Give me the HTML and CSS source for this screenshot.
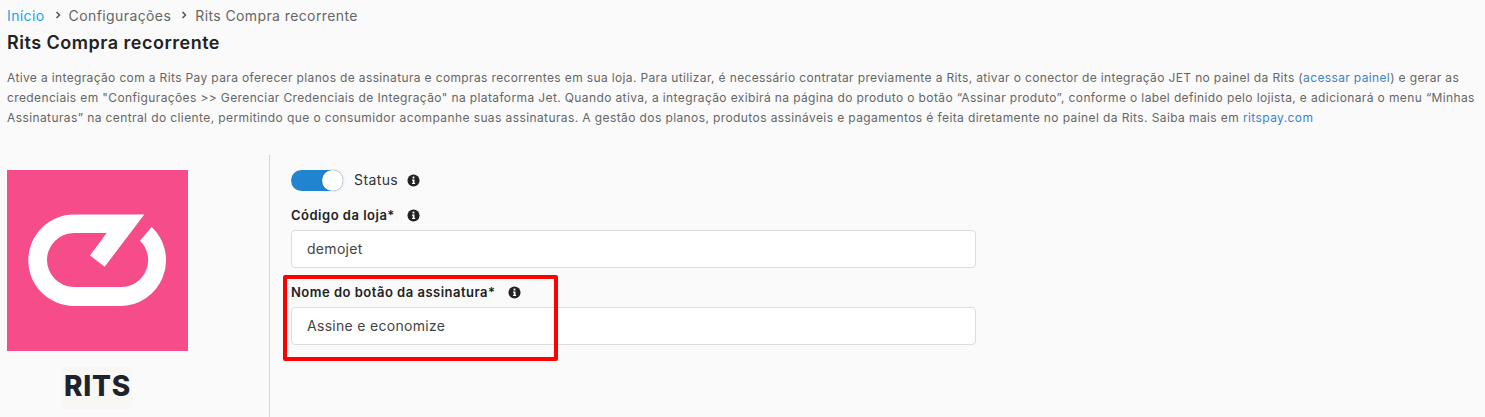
FILE: index.html
```html
<!DOCTYPE html>
<html lang="pt-BR">
<head>
<meta charset="utf-8">
<title>Rits Compra recorrente</title>
<link rel="stylesheet" href="styles.css">
</head>
<body>
<nav class="crumbs">
  <a class="crumb-home" href="#">Início</a>
  <svg class="chev" viewBox="0 0 8 10"><path d="M2.5 2 5.5 5 2.5 8" fill="none" stroke="#555" stroke-width="1.5"/></svg>
  <span>Configurações</span>
  <svg class="chev" viewBox="0 0 8 10"><path d="M2.5 2 5.5 5 2.5 8" fill="none" stroke="#555" stroke-width="1.5"/></svg>
  <span>Rits Compra recorrente</span>
</nav>
<h1 class="title">Rits Compra recorrente</h1>
<p class="desc"><span class="line l1">Ative a integração com a Rits Pay para oferecer planos de assinatura e compras recorrentes em sua loja. Para utilizar, é necessário contratar previamente a Rits, ativar o conector de integração JET no painel da Rits (<a href="#">acessar painel</a>) e gerar as</span><span class="line l2">credenciais em "Configurações &gt;&gt; Gerenciar Credenciais de Integração" na plataforma Jet. Quando ativa, a integração exibirá na página do produto o botão “Assinar produto”, conforme o label definido pelo lojista, e adicionará o menu “Minhas</span><span class="line l3">Assinaturas” na central do cliente, permitindo que o consumidor acompanhe suas assinaturas. A gestão dos planos, produtos assináveis e pagamentos é feita diretamente no painel da Rits. Saiba mais em <a href="#">ritspay.com</a></span></p>
<main class="content">
  <aside class="side">
    <svg class="logo" viewBox="0 0 181 181">
      <rect width="181" height="181" fill="#f64c89"/>
      <path fill="#fff" d="M137.3 44.5H67A45.75 45.75 0 0 0 67 136H113A45.75 45.75 0 0 0 144.7 57L133 70.7A27 27 0 0 1 113 117H67A27 27 0 0 1 67 63H99.7L83 85.5 97.7 96.7Z"/>
    </svg>
    <div class="brand">RITS</div>
  </aside>
  <section class="form">
    <div class="status">
      <span class="toggle"><span class="knob"></span></span>
      <span class="status-label">Status</span>
      <svg class="info" viewBox="0 0 14 14"><circle cx="7" cy="7" r="6.5" fill="#222"/><rect x="6" y="2.8" width="2" height="2" fill="#fff"/><path fill="#fff" d="M5.4 6h2.7v3.6h.7v1.2H5.4V9.6h.8V7.2h-.8z"/></svg>
    </div>
    <div class="field">
      <div class="label-row"><label class="label">Código da loja*</label><svg class="info" viewBox="0 0 14 14"><circle cx="7" cy="7" r="6.5" fill="#222"/><rect x="6" y="2.8" width="2" height="2" fill="#fff"/><path fill="#fff" d="M5.4 6h2.7v3.6h.7v1.2H5.4V9.6h.8V7.2h-.8z"/></svg></div>
      <div class="input">demojet</div>
    </div>
    <div class="field">
      <div class="label-row"><label class="label">Nome do botão da assinatura*</label><svg class="info" viewBox="0 0 14 14"><circle cx="7" cy="7" r="6.5" fill="#222"/><rect x="6" y="2.8" width="2" height="2" fill="#fff"/><path fill="#fff" d="M5.4 6h2.7v3.6h.7v1.2H5.4V9.6h.8V7.2h-.8z"/></svg></div>
      <div class="input">Assine e economize</div>
      <div class="highlight"></div>
    </div>
  </section>
</main>
</body>
</html>
```
FILE: styles.css
```css
* { box-sizing: border-box; }
html, body { margin: 0; height: 417px; overflow: hidden; }
body { background: #fafafa; font-family: Inter, "Open Sans", sans-serif; color: #222; padding: 0 0 0 7px; }
.crumbs { display: flex; align-items: center; height: 32px; padding-bottom: 2px; font-size: 14px; letter-spacing: .4px; color: #666; }
.crumb-home { color: #14a5ee; text-decoration: none; }
.chev { width: 8px; height: 10px; margin: 0 7px 0 9px; }
.title { margin: 0; font-size: 18px; line-height: 22px; font-weight: 600; letter-spacing: .5px; color: #222; }
.desc { margin: 14px 0 0; font-size: 12px; line-height: 20px; color: #666; white-space: nowrap; height: 87px; }
.line { display: block; }
.l1 { letter-spacing: .36px; }
.l2 { letter-spacing: .38px; }
.l3 { letter-spacing: .4px; }
.desc a { color: #3c84c8; text-decoration: none; }
.content { display: flex; height: 262px; }
.side { width: 263px; border-right: 1px solid #d6d6d6; padding-top: 15px; }
.logo { display: block; width: 181px; height: 181px; }
.brand { width: 69px; height: 42px; margin: 16px 0 0 56px; background: #f8f7f4; color: #1d222c; font-weight: 800; font-size: 28px; letter-spacing: .8px; line-height: 38px; text-align: center; }
.form { width: 706px; padding: 15px 0 0 21px; }
.status { display: flex; align-items: center; height: 21px; }
.toggle { display: flex; justify-content: flex-end; width: 52px; height: 21px; border-radius: 11px; background: #2184d0; }
.knob { width: 21px; height: 21px; border-radius: 50%; background: #fff; box-shadow: 0 0 2px rgba(0,0,0,.35); }
.status-label { margin: 0 9px 0 11px; padding-bottom: 2px; font-size: 14px; letter-spacing: .4px; color: #333; }
.info { display: block; width: 13px; height: 13px; }
.field { position: relative; }
.label-row { display: flex; align-items: center; gap: 12px; height: 19px; margin-top: 15px; }
.label { padding-bottom: 2px; font-size: 13px; font-weight: 600; letter-spacing: .5px; color: #222; }
.input { display: flex; align-items: center; height: 38px; margin-top: 5px; padding: 0 0 2px 15px; background: #fff; border: 1px solid #ddd; border-radius: 4px; font-size: 14px; letter-spacing: .3px; color: #444; }
.highlight { position: absolute; left: -8px; top: -8px; width: 275px; height: 86px; border: 4.5px solid #f00; border-radius: 2px; pointer-events: none; }
```
